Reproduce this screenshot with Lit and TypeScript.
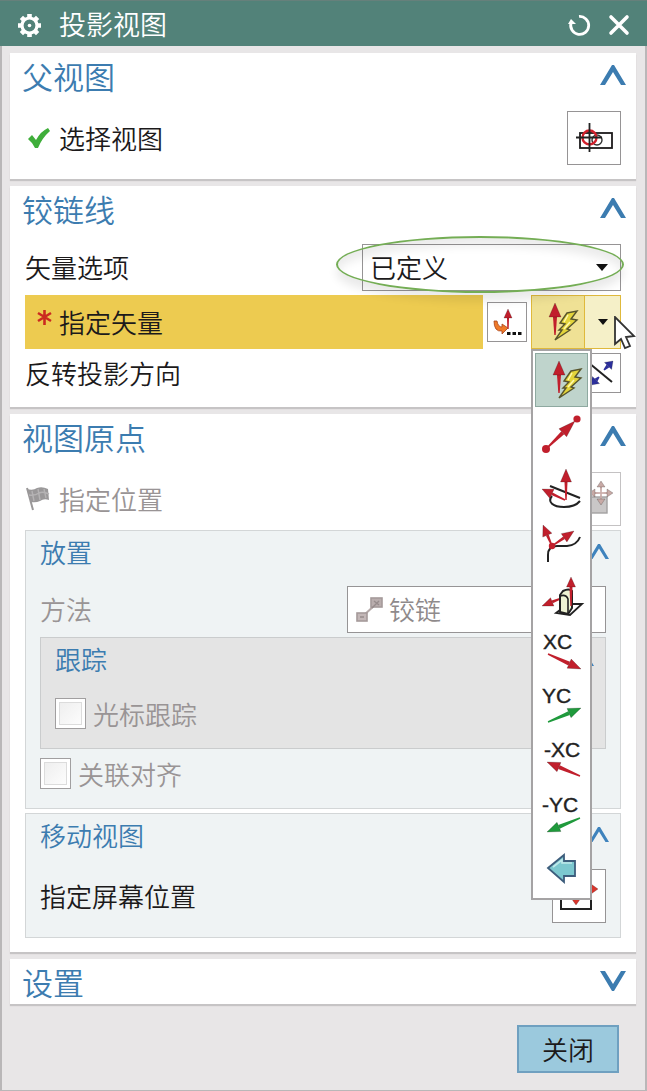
import { LitElement, html, svg, css, nothing, type TemplateResult } from "lit";
import { customElement, property, state } from "lit/decorators.js";
import { classMap } from "lit/directives/class-map.js";

const RED = "#c11f2c";
const GREEN = "#1f9a3c";

/** A tapered arrow running from (x1, y1) to its tip at (x2, y2). */
function arrow(x1: number, y1: number, x2: number, y2: number, color: string, head = 12, half = 5, shaft = 3) {
  const len = Math.hypot(x2 - x1, y2 - y1);
  const ux = (x2 - x1) / len;
  const uy = (y2 - y1) / len;
  const bx = x2 - ux * head;
  const by = y2 - uy * head;
  const at = (x: number, y: number, w: number) => `${x - uy * w},${y + ux * w}`;
  const body = `${at(x1, y1, 0.7)} ${at(bx, by, shaft / 2)} ${at(bx, by, -shaft / 2)} ${at(x1, y1, -0.7)}`;
  const tip = `${x2},${y2} ${at(bx, by, half)} ${at(bx, by, -half)}`;
  return svg`<polygon points=${body} fill=${color}></polygon>
    <polygon points=${tip} fill=${color} stroke="#00000055" stroke-width="0.6"></polygon>`;
}

const glyph = (size: number, body: unknown) =>
  html`<svg width=${size} height=${size} viewBox="0 0 ${size} ${size}" fill="none" aria-hidden="true">${body}</svg>`;

const axis = (label: string, x: number, body: unknown) =>
  glyph(54, svg`<text x=${x} y="24" font-family="Liberation Sans, Arial, sans-serif" font-size="21" font-weight="400"
      fill="#222" stroke="#222" stroke-width="0.4">${label}</text>${body}`);

const inferred = glyph(54, svg`
  ${arrow(24, 40, 24, 8, RED, 14, 6, 4)}
  <polygon points="36,18 46,16 40,24 46,25 36,34 39,35 24,45 31,35 28,35 34,29 29,28" fill="#e3d43a" stroke="#57542c" stroke-width="1.4"></polygon>
  <path d="M37 20 L33 27 M39 27 L33 34" stroke="#fff9b0" stroke-width="1.5"></path>`);

const menuItems: { name: string; icon: TemplateResult }[] = [
  { name: "自动判断的矢量", icon: inferred },
  {
    name: "两点",
    icon: glyph(54, svg`${arrow(11, 42, 40, 14, RED, 17, 5.5, 4)}
      <circle cx="11" cy="42" r="4" fill=${RED}></circle><circle cx="42" cy="12" r="3.6" fill=${RED}></circle>`),
  },
  {
    name: "曲线/轴矢量",
    icon: glyph(54, svg`<path d="M15 24 L45 36" stroke="#222" stroke-width="2"></path>
      <path d="M17 34 C12 40 18 45 29 45 Q40 45 45 39" stroke="#222" stroke-width="2"></path>
      ${arrow(30, 38, 7, 27, RED, 11, 5)}${arrow(31, 38, 31, 7, RED, 13, 5.5)}`),
  },
  {
    name: "曲线上矢量",
    icon: glyph(54, svg`<path d="M13 46 V39 Q13 30 22 30 L32 30 Q42 29 45 21" stroke="#222" stroke-width="2"></path>
      ${arrow(17, 30, 8, 9, RED, 11, 5)}${arrow(17, 30, 39, 15, RED, 12, 5)}
      <circle cx="17" cy="30" r="3.2" fill=${RED}></circle>`),
  },
  {
    name: "面/平面法向",
    icon: glyph(54, svg`<polygon points="21,43 33,34 47,34 35,45" stroke="#222" stroke-width="1.8" fill="#fff"></polygon>
      ${arrow(27, 28, 7, 36, RED, 11, 4.5)}
      <path d="M25 25 L28 21 Q34 18 37 21 V38 L33 44 L25 42 Z" fill="#eef3d3" stroke="#222" stroke-width="2"></path>
      <path d="M25 26 Q31 24 33 29 V43" stroke="#222" stroke-width="1.6"></path>
      ${arrow(36, 36, 36, 7, RED, 10, 4.5)}`),
  },
  { name: "XC 轴", icon: axis("XC", 8, arrow(13, 29, 46, 44, RED, 13, 5, 4)) },
  { name: "YC 轴", icon: axis("YC", 7, arrow(13, 43, 46, 29, GREEN, 13, 5, 4)) },
  { name: "-XC 轴", icon: axis("-XC", 9, arrow(45, 43, 12, 29, RED, 13, 5, 4)) },
  { name: "-YC 轴", icon: axis("-YC", 7, arrow(45, 30, 12, 44, GREEN, 13, 5, 4)) },
  {
    name: "返回",
    icon: glyph(54, svg`<polygon points="13,26 29,13 29,19 40,19 40,34 29,34 29,40" fill="#7cc8cf" stroke="#3d5d7c" stroke-width="1.8"></polygon>
      <path d="M18 25 L27 18 V21 H37" stroke="#bfe9ea" stroke-width="1.6"></path>`),
  },
];

const caret = html`<svg class="caret" width="12" height="7" viewBox="0 0 12 7" aria-hidden="true"><polygon points="0,0 12,0 6,7" fill="#111"></polygon></svg>`;

const shared = css`
  :host { display: block; }
  *, *::before, *::after { box-sizing: border-box; }
  button, select, input { margin: 0; font: inherit; color: inherit; }
  svg { display: block; flex: none; }
  h2, h3 { margin: 0; font-weight: inherit; }
`;

@customElement("dialog-section")
class DialogSection extends LitElement {
  @property() heading = "";
  @property() kind: "panel" | "group" | "nested" = "panel";
  @property({ type: Boolean }) collapsed = false;

  static styles = [shared, css`
    .panel { background: #fff; box-shadow: 0 2px 1px #c6c4c5; }
    .group { background: #eff3f4; border: 1px solid #d3d6d7; }
    .nested { background: #e4e4e4; border: 1px solid #cacccd; }
    .head { display: flex; align-items: center; justify-content: space-between; color: #3c7cb0; }
    .panel > .head { padding: 4px 10px 3px 12px; }
    .group > .head, .nested > .head { padding: 2px 11px 2px 14px; }
    .title { font-size: 26px; line-height: 38px; }
    .panel > .head .title { font-size: 31px; }
    .toggle { border: 0; padding: 0 0 2px; background: none; cursor: pointer; }
    .content { display: flex; flex-direction: column; gap: 4px; padding: 13px 15px 14px; }
    .group > .content, .nested > .content { padding: 13px 14px 14px; }
  `];

  render() {
    const big = this.kind === "panel";
    const icon = big
      ? html`<svg width="26" height="20" viewBox="0 0 26 20" aria-hidden="true">${this.collapsed
          ? svg`<polygon points="0,0 5,0 13,13 21,0 26,0 14,20 12,20" fill="#3c7cb0"></polygon>`
          : svg`<polygon points="0,20 12,0 14,0 26,20 21,20 13,7 5,20" fill="#3c7cb0"></polygon>`}</svg>`
      : html`<svg width="20" height="15" viewBox="0 0 20 15" aria-hidden="true"><polygon points="0,15 9,0 11,0 20,15 16.5,15 10,4.5 3.5,15" fill="#3f83bd"></polygon></svg>`;
    return html`
      <section class=${this.kind}>
        <header class="head">
          ${big ? html`<h2 class="title">${this.heading}</h2>` : html`<h3 class="title">${this.heading}</h3>`}
          <button class="toggle" type="button" aria-label=${this.heading} aria-expanded=${String(!this.collapsed)}
            @click=${() => (this.collapsed = !this.collapsed)}>${icon}</button>
        </header>
        ${this.collapsed ? nothing : html`<div class="content"><slot></slot></div>`}
      </section>`;
  }
}

@customElement("app-root")
class AppRoot extends LitElement {
  @state() private menuOpen = true;
  @state() private active = 0;

  static styles = [shared, css`
    :host { font-family: "Noto Sans CJK SC", sans-serif; font-weight: 350; font-size: 26px; line-height: 38px; color: #1c1a1b; }
    .window { min-height: 100vh; background: #e8e6e7; }
    .titlebar { display: flex; align-items: center; height: 46px; padding: 3px 17px 0; background: #528279; border-top: 1px solid #66807b; color: #fff; }
    .caption { flex: 1; margin: 0; padding: 0 0 2px 17px; font-size: 27px; font-weight: inherit; line-height: 38px; }
    .tool { padding: 0; border: 0; background: none; cursor: pointer; }
    .tool + .tool { margin-left: 17px; }
    .body { display: flex; flex-direction: column; gap: 7px; padding: 7px 9px 17px 8px; border: solid #b9b7b8; border-width: 0 2px 2px; }

    .row { display: flex; align-items: center; justify-content: space-between; gap: 4px; min-height: 40px; }
    .name { display: flex; align-items: center; flex: 1; padding-bottom: 1px; white-space: nowrap; }
    .mark { width: 34px; flex: none; display: flex; }
    .dim { color: #999495; }
    .required { align-self: stretch; background: #edcb50; }
    .required .mark { padding: 0 0 8px 10px; }
    .btn { display: flex; align-items: center; justify-content: center; flex: none; width: 54px; height: 54px; padding: 0; background: #fff; border: 1px solid #969495; cursor: pointer; }
    .btn svg { margin: -1px; }
    .small { width: 40px; height: 40px; }
    .faint { border-color: #c4c2c3; }

    .pick { position: relative; flex: none; width: 259px; }
    .select { display: block; width: 100%; height: 47px; padding: 0 32px 2px 7px; appearance: none; border: 1px solid #969495; border-radius: 0; background: #fff; opacity: 1; }
    .pick .caret { position: absolute; right: 13px; top: 20px; pointer-events: none; }
    .pick-icon { position: absolute; left: 8px; top: 10px; pointer-events: none; }
    .with-icon { padding-left: 41px; color: #8f8a8b; }
    .ring { position: absolute; z-index: 1; inset: -8px -3px -2px -26px; border: 2px solid #74ad55; border-radius: 50%; box-shadow: 0 8px 10px #00000016, inset 0 8px 10px #00000014; pointer-events: none; }

    .split { position: relative; display: flex; flex: none; width: 90px; height: 54px; }
    .main { width: 54px; flex: none; padding: 0; background: #efe195; border: 1px solid #dfb93c; cursor: pointer; }
    .main svg { margin: -1px; }
    .drop { flex: 1; display: flex; align-items: center; justify-content: center; padding: 0; background: #f5f0c8; border: 1px solid #dfb93c; border-left: 0; cursor: pointer; }
    .drop .caret { width: 10px; height: 6px; }
    .menu { position: absolute; z-index: 3; top: 54px; left: 0; width: 61px; height: 551px; display: flex; flex-direction: column; margin: 0; padding: 2px; list-style: none; background: #fff; border: 2px solid #a5a3a4; }
    .entry { flex: 1; }
    .choice { display: block; width: 100%; height: 100%; padding: 0; background: none; border: 1px solid transparent; cursor: pointer; }
    .choice svg { margin: -1px; }
    .current { background: #bfd4cc; border-color: #8ea9a0; }
    .pointer { position: absolute; z-index: 4; left: 83px; top: 21px; pointer-events: none; }

    .tick { display: flex; align-items: center; min-height: 41px; gap: 7px; }
    .box { appearance: none; flex: none; width: 31px; height: 31px; border: 1px solid #a19fa0; background: linear-gradient(135deg, #ececec, #fff); box-shadow: inset 0 0 0 3px #fff, inset 0 0 0 4px #dcdcdc; }

    .footer { display: flex; justify-content: flex-end; padding: 14px 17px 0 0; }
    .close { width: 102px; height: 48px; padding: 0; background: #9bc9dd; border: 2px solid #6fa0c0; line-height: 44px; cursor: pointer; }
  `];

  render() {
    return html`
      <main class="window">
        <header class="titlebar">
          ${glyph(25, svg`<circle cx="12.5" cy="12.5" r="7.5" stroke="#fff" stroke-width="3.2"></circle>
            <circle cx="12.5" cy="12.5" r="1.8" fill="#fff"></circle>
            <path d="M12.5 1 V5 M12.5 20 V24 M1 12.5 H5 M20 12.5 H24 M4.4 4.4 L7 7 M18 18 L20.6 20.6 M4.4 20.6 L7 18 M18 7 L20.6 4.4" stroke="#fff" stroke-width="4.6"></path>`)}
          <h1 class="caption">投影视图</h1>
          <button class="tool" type="button" aria-label="重置">
            ${glyph(24, svg`<path d="M12 3.4 A9 9 0 1 1 4 10" stroke="#fff" stroke-width="2.8"></path><polygon points="1,11 4,6 9,11" fill="#fff"></polygon>`)}
          </button>
          <button class="tool" type="button" aria-label="关闭窗口">
            ${glyph(22, svg`<path d="M3 3 L19 19 M19 3 L3 19" stroke="#fff" stroke-width="3.6" stroke-linecap="round"></path>`)}
          </button>
        </header>

        <div class="body">
          <dialog-section heading="父视图">
            <div class="row">
              <span class="name"><span class="mark">${glyph(26, svg`<path d="M3 14 L7 10 L11 15 Q16 6 23 3 L25 6 Q17 13 13 23 L10 23 Q7 17 3 14 Z" fill="#3fae3a"></path>`)}</span>选择视图</span>
              <button class="btn" type="button" aria-label="选择视图">
                ${glyph(54, svg`<rect x="13" y="22" width="32" height="15" stroke="#1c1a1b" stroke-width="1.8"></rect>
                  <circle cx="30" cy="29" r="5" stroke="#333" stroke-width="1.4"></circle>
                  <circle cx="22.5" cy="26.5" r="7" stroke="#d3202c" stroke-width="2.4"></circle>
                  <path d="M22.5 12 V41 M9 26.5 H35" stroke="#222" stroke-width="1.8"></path>`)}
              </button>
            </div>
          </dialog-section>

          <dialog-section heading="铰链线">
            <div class="row">
              <label class="name" for="option">矢量选项</label>
              <span class="pick">
                <select class="select" id="option"><option>已定义</option><option>自动判断</option></select>
                ${caret}<span class="ring"></span>
              </span>
            </div>
            <div class="row">
              <span class="name required"><span class="mark">${glyph(20, svg`<path d="M9.5 2 V17 M3 5 L16 13 M16 5 L3 13" stroke="#cb2a20" stroke-width="2.6"></path>`)}</span>指定矢量</span>
              <button class="btn small" type="button" aria-label="矢量对话框">
                ${glyph(40, svg`${arrow(21, 27, 21, 7, RED, 9, 4, 2)}
                  <path d="M7 19 Q7 30 15 29 V32 L21 26 L15 22 V25 Q11 25 10 19 Z" fill="#ef7a28" stroke="#a8431a" stroke-width="0.8"></path>
                  <path d="M20 31.5 H23.5 M25.5 31.5 H29 M31 31.5 H34.5" stroke="#111" stroke-width="3.2"></path>`)}
              </button>
              <div class="split">
                <button class="main" type="button" aria-label="自动判断的矢量">${inferred}</button>
                <button class="drop" type="button" aria-label="更多矢量类型" aria-expanded=${String(this.menuOpen)}
                  @click=${() => (this.menuOpen = !this.menuOpen)}>${caret}</button>
                ${this.menuOpen ? html`<ul class="menu">${menuItems.map((item, i) => html`
                  <li class="entry"><button type="button" class=${classMap({ choice: true, current: i === this.active })}
                    aria-label=${item.name} @click=${() => (this.active = i)}>${item.icon}</button></li>`)}</ul>` : nothing}
                <svg class="pointer" width="22" height="34" viewBox="0 0 22 34" aria-hidden="true">
                  <polygon points="1,1 1,28 7,23 11,32 16,30 12,21 20,20" fill="#fff" stroke="#333" stroke-width="1.8"></polygon>
                </svg>
              </div>
            </div>
            <div class="row">
              <span class="name">反转投影方向</span>
              <button class="btn small" type="button" aria-label="反转投影方向">
                ${glyph(40, svg`<path d="M8 10 L31 29" stroke="#222" stroke-width="2"></path>
                  ${arrow(23, 17, 32, 8, "#2c2f9c", 7, 5, 4)}${arrow(18, 24, 10, 32, "#2c2f9c", 7, 5, 4)}`)}
              </button>
            </div>
          </dialog-section>

          <dialog-section heading="视图原点">
            <div class="row">
              <span class="name dim"><span class="mark">${glyph(26, svg`<path d="M2 2 L8 24" stroke="#9a9899" stroke-width="2"></path>
                <path d="M2 3 Q8 5 12 2 Q17 0 23 3 L24 14 Q19 12 15 15 Q11 17 6 16 Z" fill="#9a9899"></path>
                <path d="M7 5 L9 15 M13 3 L15 14 M19 3 L21 12 M4 9 Q10 10 14 7 Q18 5 24 8" stroke="#b5b3b4" stroke-width="1.4"></path>`)}</span>指定位置</span>
              <button class="btn faint" type="button" disabled aria-label="指定位置">
                ${glyph(54, svg`<rect x="15" y="25" width="25" height="16" fill="#c9c7c7" stroke="#a3a1a1" stroke-width="1.4"></rect>
                  ${[[34, 9], [34, 33], [22, 21], [46, 21]].map(([x, y]) => arrow(34, 21, x, y, "#c8aaa6", 6, 4, 2))}`)}
              </button>
            </div>

            <dialog-section kind="group" heading="放置">
              <div class="row">
                <label class="name dim" for="method">方法</label>
                <span class="pick">
                  <select class="select with-icon" id="method" disabled><option>铰链</option></select>
                  <span class="pick-icon">${glyph(28, svg`<path d="M7 21 L22 7" stroke="#b5aaa9" stroke-width="2"></path>
                    <rect x="2" y="17" width="10" height="8" fill="#c3b7b7" stroke="#a59a9a" stroke-width="1.6"></rect>
                    <rect x="16" y="2" width="11" height="9" fill="#b9adad" stroke="#a59a9a" stroke-width="1.6"></rect>
                    <path d="M5 21 H9 M19 5 L24 9 M24 5 L17 12" stroke="#978c8c" stroke-width="1.4"></path>`)}</span>
                </span>
              </div>
              <dialog-section kind="nested" heading="跟踪">
                <label class="tick dim"><input class="box" type="checkbox" disabled>光标跟踪</label>
              </dialog-section>
              <label class="tick dim"><input class="box" type="checkbox" disabled>关联对齐</label>
            </dialog-section>

            <dialog-section kind="group" heading="移动视图">
              <div class="row">
                <span class="name">指定屏幕位置</span>
                <button class="btn" type="button" aria-label="指定屏幕位置">
                  ${glyph(54, svg`<rect x="9" y="18" width="30" height="22" stroke="#222" stroke-width="2"></rect>
                    ${[[24, 7], [24, 36], [9, 20], [46, 20]].map(([x, y]) => arrow(24, 20, x, y, "#d8352c", 7, 5, 2))}`)}
                </button>
              </div>
            </dialog-section>
          </dialog-section>

          <dialog-section heading="设置" collapsed></dialog-section>

          <footer class="footer"><button class="close" type="button">关闭</button></footer>
        </div>
      </main>`;
  }
}
